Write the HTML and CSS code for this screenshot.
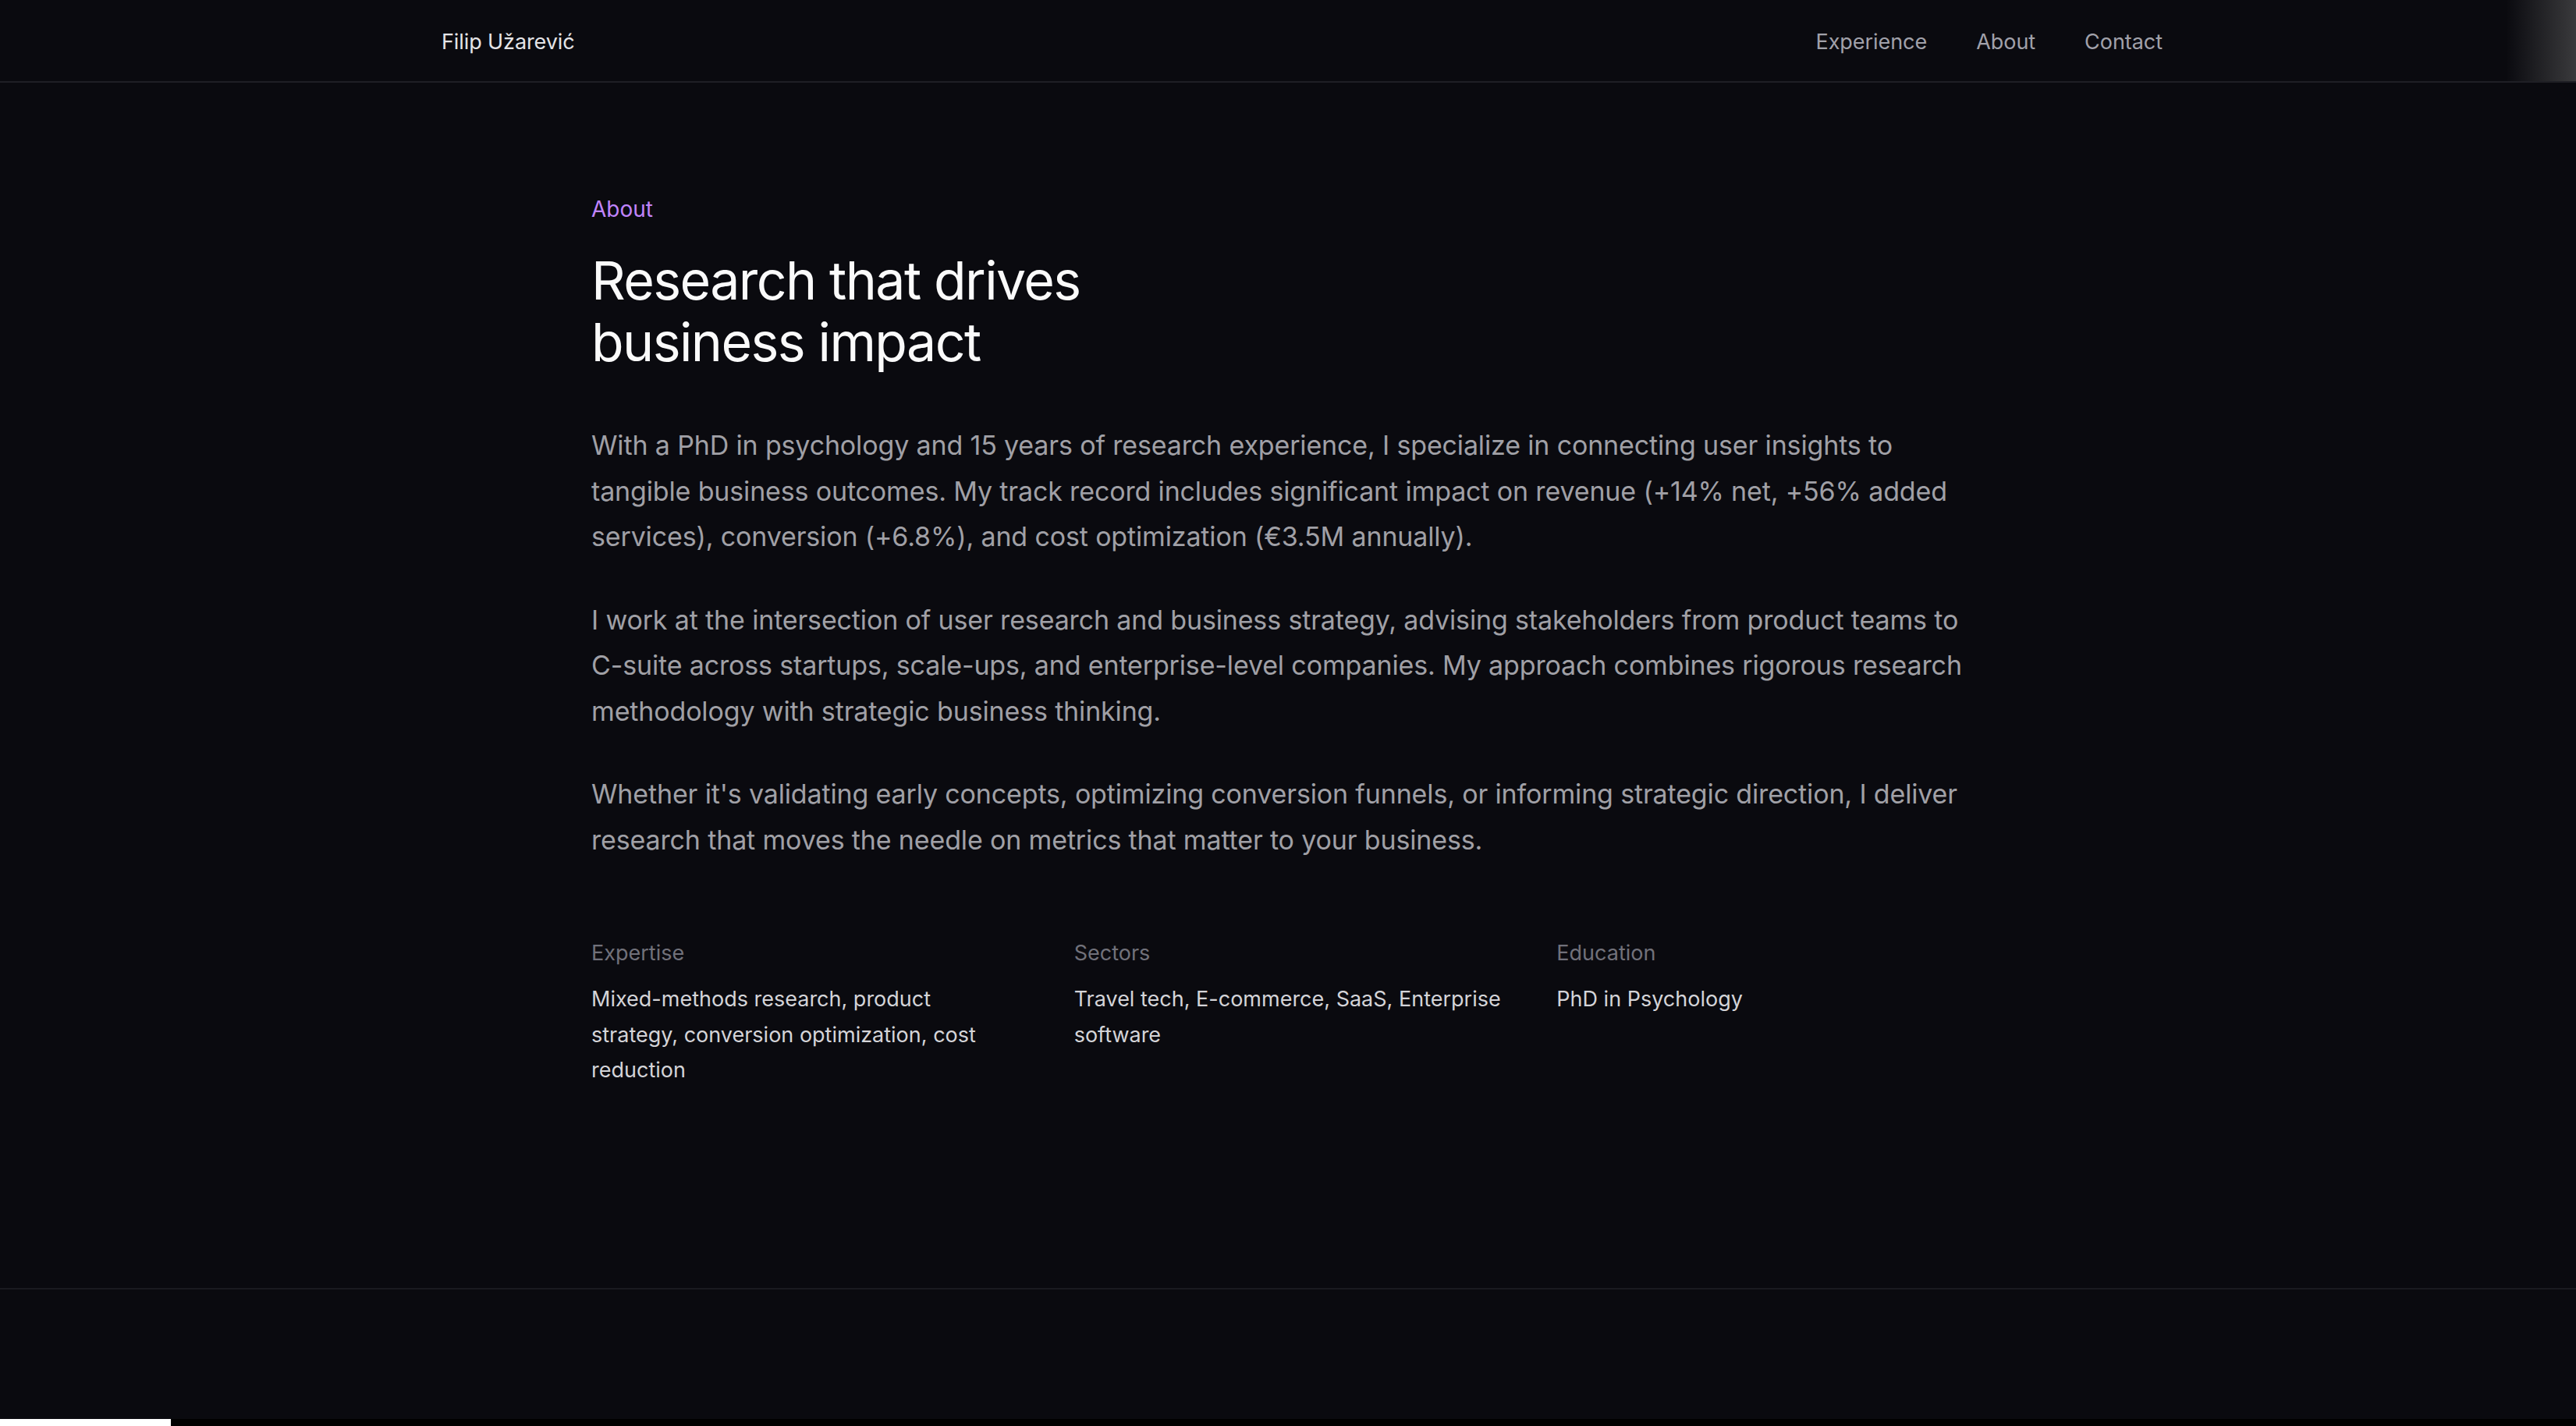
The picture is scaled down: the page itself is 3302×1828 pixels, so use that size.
FILE: index.html
```html
<!DOCTYPE html>
<html lang="en">
<head>
<meta charset="utf-8">
<title>Filip Užarević</title>
<link rel="stylesheet" href="styles.css">
</head>
<body>
<div class="page">
  <header class="nav">
    <div class="nav-inner">
      <a class="brand" href="#">Filip Užarević</a>
      <nav class="links">
        <a href="#">Experience</a>
        <a href="#">About</a>
        <a href="#">Contact</a>
      </nav>
    </div>
    <div class="edge-fade"></div>
  </header>

  <main class="about">
    <div class="content">
      <p class="eyebrow">About</p>
      <h1 class="title">Research that drives<br>business impact</h1>
      <p class="body-text">With a PhD in psychology and 15 years of research experience, I specialize in connecting user insights to tangible business outcomes. My track record includes significant impact on revenue (+14% net, +56% added services), conversion (+6.8%), and cost optimization (€3.5M annually).</p>
      <p class="body-text">I work at the intersection of user research and business strategy, advising stakeholders from product teams to C-suite across startups, scale-ups, and enterprise-level companies. My approach combines rigorous research methodology with strategic business thinking.</p>
      <p class="body-text">Whether it's validating early concepts, optimizing conversion funnels, or informing strategic direction, I deliver research that moves the needle on metrics that matter to your business.</p>

      <div class="facts">
        <div class="fact">
          <div class="fact-label">Expertise</div>
          <div class="fact-value">Mixed-methods research, product strategy, conversion optimization, cost reduction</div>
        </div>
        <div class="fact">
          <div class="fact-label">Sectors</div>
          <div class="fact-value">Travel tech, E-commerce, SaaS, Enterprise software</div>
        </div>
        <div class="fact">
          <div class="fact-label">Education</div>
          <div class="fact-value">PhD in Psychology</div>
        </div>
      </div>
    </div>
  </main>

  <footer class="footer"></footer>
  <div class="hscroll"><div class="hscroll-thumb"></div></div>
</div>
</body>
</html>
```

FILE: styles.css
```css
* { box-sizing: border-box; }

html, body {
  margin: 0;
  padding: 0;
  background: #0a0a0f;
}

body {
  font-family: Inter, "Noto Sans", "Liberation Sans", sans-serif;
  color: #e4e4e7;
  overflow: hidden;
}

.page {
  height: 1828px;
  display: flex;
  flex-direction: column;
  overflow: hidden;
}

.nav {
  position: relative;
  height: 106px;
  border-bottom: 2px solid #1f1f25;
  flex: none;
}

.nav-inner {
  margin-left: 566px;
  width: 2206px;
  height: 104px;
  padding-top: 3px;
  display: flex;
  align-items: center;
  justify-content: space-between;
}

.brand {
  font-size: 27px;
  line-height: 40px;
  letter-spacing: -0.1px;
  color: #e4e4e7;
  text-decoration: none;
}

.links {
  display: flex;
  gap: 63px;
}

.links a {
  font-size: 27px;
  line-height: 40px;
  letter-spacing: -0.05px;
  color: #a1a1aa;
  text-decoration: none;
}

.edge-fade {
  position: absolute;
  top: 0;
  right: 0;
  width: 90px;
  height: 104px;
  background: linear-gradient(to right, rgba(58,58,60,0) 0%, rgba(58,58,60,0.55) 55%, #3a3a3c 100%);
}

.about {
  flex: none;
  padding-top: 142px;
  height: 1547px;
  border-bottom: 2px solid #1a1a20;
}

.content {
  margin-left: 758px;
  width: 1792px;
}

.eyebrow {
  margin: 0 0 32px;
  font-size: 28px;
  line-height: 40px;
  color: #c084fc;
}

.title {
  margin: 0 0 64px;
  font-size: 68px;
  line-height: 79px;
  font-weight: 400;
  color: #fafafa;
  letter-spacing: -1.6px;
}

.body-text {
  margin: 0 0 48px;
  font-size: 34px;
  line-height: 58.5px;
  letter-spacing: -0.15px;
  color: #a0a0a6;
}

.body-text:last-of-type {
  margin-bottom: 0;
}

.facts {
  margin-top: 96px;
  display: grid;
  grid-template-columns: repeat(3, 1fr);
  gap: 64px;
}

.fact {
  padding-right: 6px;
}

.fact-label {
  font-size: 27px;
  line-height: 40px;
  color: #71717a;
  margin-bottom: 16px;
}

.fact-value {
  font-size: 27px;
  line-height: 45.5px;
  color: #d4d4d8;
}

.footer {
  flex: 1;
}

.hscroll {
  flex: none;
  height: 9px;
  background: #000;
}

.hscroll-thumb {
  width: 219px;
  height: 9px;
  background: #ffffff;
}
```
